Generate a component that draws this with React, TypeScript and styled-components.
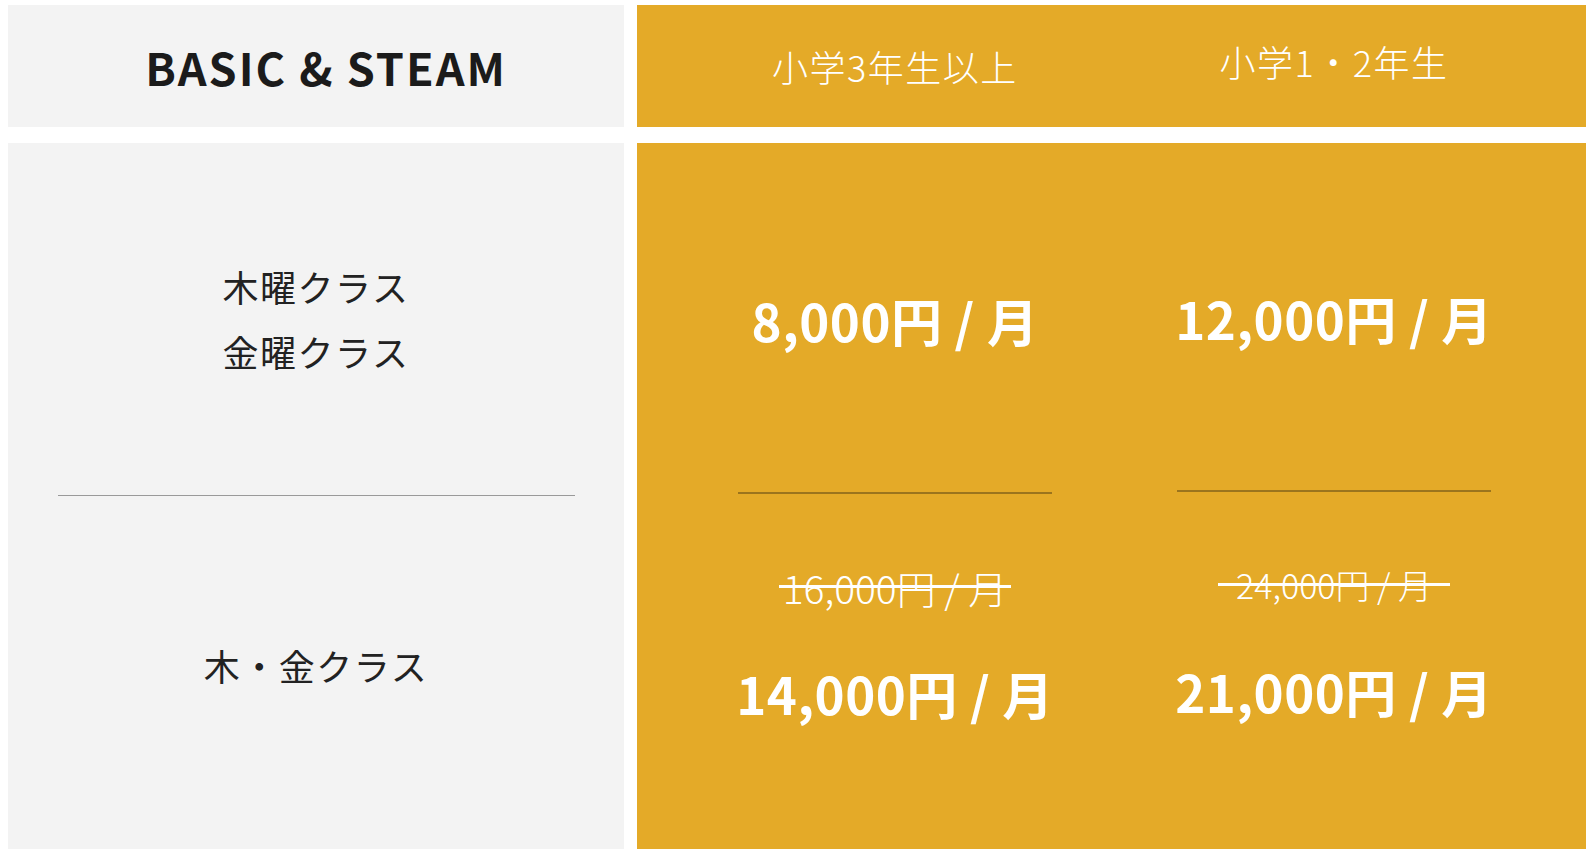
import React from "react";
import styled, { createGlobalStyle } from "styled-components";

const ORANGE = "#e4aa28";
const GRAY = "#f3f3f3";

const Global = createGlobalStyle`
  html, body { margin: 0; padding: 0; background: #ffffff; }
  body { font-family: "Noto Sans CJK JP", "Noto Sans", sans-serif; }
`;

const Page = styled.div`
  width: 1592px;
  height: 852px;
  box-sizing: border-box;
  padding: 5px 6px 3px 8px;
  display: grid;
  grid-template-columns: 616px 1fr;
  grid-template-rows: 122px 1fr;
  column-gap: 13px;
  row-gap: 16px;
  overflow: hidden;
`;

const TitleCell = styled.div`
  background: ${GRAY};
  display: flex;
  align-items: center;
  justify-content: center;
  padding-left: 20px;
`;

const Title = styled.h1`
  margin: 0;
  font-size: 45px;
  font-weight: 700;
  letter-spacing: 2px;
  color: #1b1b1b;
  line-height: 1;
`;

const OrangeRow = styled.div`
  background: ${ORANGE};
  display: grid;
  grid-template-columns: 516px 1fr;
  padding-right: 71px;
`;

const GradeCell = styled.div<{ $shift?: number }>`
  display: flex;
  align-items: center;
  justify-content: center;
  color: #ffffff;
  font-size: 36px;
  font-weight: 300;
  letter-spacing: 1.5px;
  line-height: 1;
  padding-bottom: ${(p) => (p.$shift ?? 0) * 2}px;
`;

const LeftPanel = styled.div`
  background: ${GRAY};
  display: flex;
  flex-direction: column;
  align-items: stretch;
`;

const ClassTop = styled.div`
  height: 352px;
  box-sizing: border-box;
  padding-bottom: 0px;
  display: flex;
  flex-direction: column;
  align-items: center;
  justify-content: center;
`;

const ClassBottom = styled.div`
  padding-top: 137px;
  display: flex;
  flex-direction: column;
  align-items: center;
`;

const ClassName = styled.div`
  font-size: 36px;
  font-weight: 400;
  letter-spacing: 1.5px;
  line-height: 65px;
  color: #222222;
`;

const GrayRule = styled.hr`
  border: none;
  margin: 0 49px 0 50px;
  height: 1px;
  background: #999999;
`;

const PricePanel = styled.div`
  background: ${ORANGE};
  display: grid;
  grid-template-columns: 516px 1fr;
  padding-right: 71px;
`;

const PriceColumn = styled.div`
  display: flex;
  flex-direction: column;
  align-items: center;
`;

const PriceTop = styled.div<{ $height: number }>`
  height: ${(p) => p.$height}px;
  box-sizing: border-box;
  padding-top: ${(p) => p.$height - 202}px;
  display: flex;
  justify-content: center;
`;

const Price = styled.div<{ $gap?: number }>`
  font-size: 51px;
  font-weight: 700;
  letter-spacing: 0.5px;
  line-height: 60px;
  color: #ffffff;
  white-space: nowrap;
  margin-top: ${(p) => p.$gap ?? 0}px;
`;

const OrangeRule = styled.hr`
  border: none;
  margin: 0;
  width: 314px;
  height: 2px;
  background: #9b741d;
`;

const Strike = styled.div<{ $size: number }>`
  position: relative;
  margin-top: 69px;
  width: 232px;
  text-align: center;
  font-size: ${(p) => p.$size}px;
  font-weight: 300;
  line-height: 48px;
  color: #ffffff;
  white-space: nowrap;

  &::after {
    content: "";
    position: absolute;
    left: 0;
    right: 0;
    top: 50%;
    height: 3px;
    margin-top: -2px;
    background: #ffffff;
  }
`;

const plans = [
  { grade: "小学3年生以上", shift: 0, top: 349, single: "8,000円 / 月", old: "16,000円 / 月", oldSize: 39, both: "14,000円 / 月" },
  { grade: "小学1・2年生", shift: 5, top: 347, single: "12,000円 / 月", old: "24,000円 / 月", oldSize: 34, both: "21,000円 / 月" },
];

export default function App() {
  return (
    <>
      <Global />
      <Page>
        <TitleCell>
          <Title>BASIC &amp; STEAM</Title>
        </TitleCell>
        <OrangeRow>
          {plans.map((p) => (
            <GradeCell key={p.grade} $shift={p.shift}>
              {p.grade}
            </GradeCell>
          ))}
        </OrangeRow>
        <LeftPanel>
          <ClassTop>
            <ClassName>木曜クラス</ClassName>
            <ClassName>金曜クラス</ClassName>
          </ClassTop>
          <GrayRule />
          <ClassBottom>
            <ClassName>木・金クラス</ClassName>
          </ClassBottom>
        </LeftPanel>
        <PricePanel>
          {plans.map((p) => (
            <PriceColumn key={p.grade}>
              <PriceTop $height={p.top}>
                <Price>{p.single}</Price>
              </PriceTop>
              <OrangeRule />
              <Strike $size={p.oldSize}>{p.old}</Strike>
              <Price $gap={52}>{p.both}</Price>
            </PriceColumn>
          ))}
        </PricePanel>
      </Page>
    </>
  );
}
